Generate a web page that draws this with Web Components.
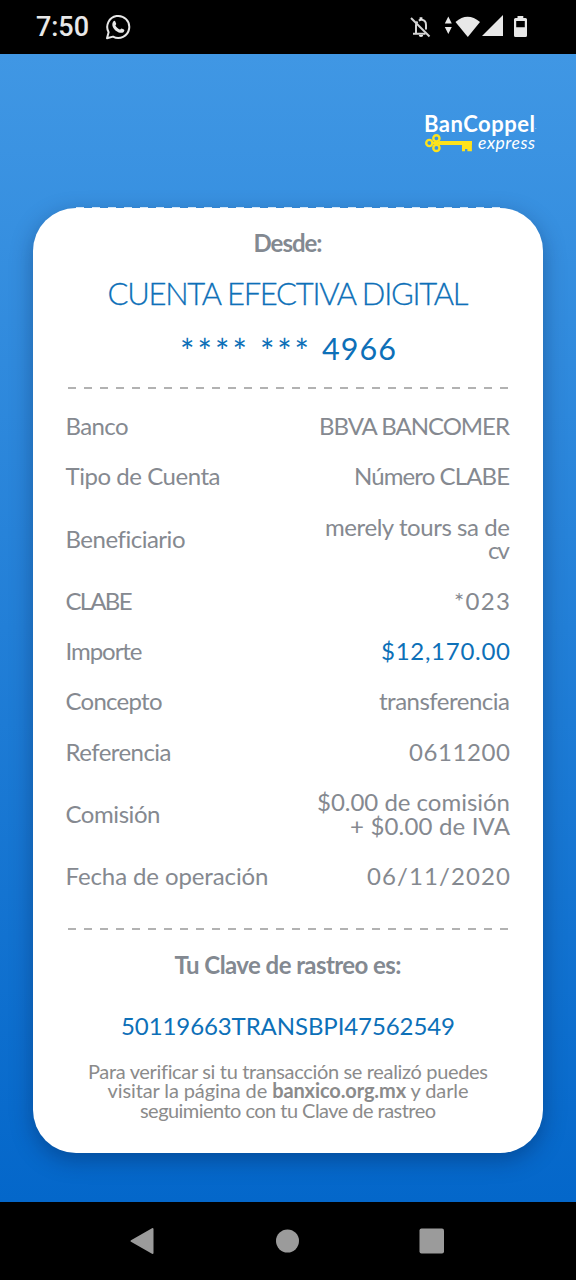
<!DOCTYPE html>
<html lang="es">
<head>
<meta charset="utf-8">
<title>BanCoppel express</title>
<style>
    html, body {
        margin: 0;
        height: 100%;
        background: #000;
    }

    body {
        font-family: Lato, "Liberation Sans", sans-serif;
        overflow: hidden;
    }
</style>
</head>
<body>
<bc-screen>
    <bc-status slot="status" time="7:50"></bc-status>
    <bc-logo slot="logo"></bc-logo>
    <bc-card>
        <bc-line kind="heading"><fit-text width="69">Desde:</fit-text></bc-line>
        <bc-line kind="title"><fit-text width="361">CUENTA EFECTIVA DIGITAL</fit-text></bc-line>
        <bc-line kind="number"><fit-text width="67" class="mask">****</fit-text><fit-text width="49" class="mask">***</fit-text><fit-text width="74">4966</fit-text></bc-line>
        <bc-divider></bc-divider>
        <bc-rows>
            <bc-row label="Banco" label-width="63"><fit-text width="191">BBVA BANCOMER</fit-text></bc-row>
            <bc-row label="Tipo de Cuenta" label-width="155"><fit-text width="156">Número CLABE</fit-text></bc-row>
            <bc-row label="Beneficiario" label-width="120"><fit-text width="185">merely tours sa de</fit-text><fit-text width="22">cv</fit-text></bc-row>
            <bc-row label="CLABE" label-width="67"><fit-text width="56">*023</fit-text></bc-row>
            <bc-row label="Importe" label-width="77" accent><fit-text width="129">$12,170.00</fit-text></bc-row>
            <bc-row label="Concepto" label-width="97"><fit-text width="131">transferencia</fit-text></bc-row>
            <bc-row label="Referencia" label-width="106"><fit-text width="101">0611200</fit-text></bc-row>
            <bc-row label="Comisión" label-width="95"><fit-text width="193">$0.00 de comisión</fit-text><fit-text width="160">+ $0.00 de IVA</fit-text></bc-row>
            <bc-row label="Fecha de operación" label-width="203"><fit-text width="143">06/11/2020</fit-text></bc-row>
        </bc-rows>
        <bc-divider style="margin-top: 27.5px"></bc-divider>
        <bc-line kind="clave"><fit-text width="227">Tu Clave de rastreo es:</fit-text></bc-line>
        <bc-line kind="tracking"><fit-text width="334">50119663TRANSBPI47562549</fit-text></bc-line>
        <bc-note>
            <fit-text width="400">Para verificar si tu transacción se realizó puedes</fit-text>
            <fit-text width="361">visitar la página de <b>banxico.org.mx</b> y darle</fit-text>
            <fit-text width="296">seguimiento con tu Clave de rastreo</fit-text>
        </bc-note>
    </bc-card>
    <bc-nav slot="nav"></bc-nav>
</bc-screen>

<script>
// Spreads its text over a given width with letter spacing
class FitText extends HTMLElement {

    constructor() {
        super();
        this.attachShadow({ mode: "open" });
        this.shadowRoot.innerHTML = `
        <style>
            :host {
            display: block;
            white-space: nowrap;
            font-kerning: normal;
            }

            :host(.mask) {
            font-size: 34px;
            line-height: 46px;
            height: 40px;
            }

            span {
            display: inline-block;
            }
        </style>
        <span><slot></slot></span>
        `;
    }

    connectedCallback() {
        const span = this.shadowRoot.querySelector("span");
        const width = Number(this.getAttribute("width"));
        const count = this.textContent.length;
        // turn ligatures off before measuring, as letter spacing does
        span.style.fontVariantLigatures = "none";
        const natural = span.getBoundingClientRect().width;
        const spacing = (width - natural) / (count - 1);
        span.style.letterSpacing = `${spacing}px`;
        span.style.marginRight = `${-spacing}px`;
    }
}

class BCScreen extends HTMLElement {

    constructor() {
        super();
        this.attachShadow({ mode: "open" });
        this.shadowRoot.innerHTML = `
        <style>
            :host {
            display: flex;
            flex-direction: column;
            width: 576px;
            height: 1280px;
            }

            main {
            flex: 1;
            display: flex;
            flex-direction: column;
            background: linear-gradient(#4097e4, #0467ca);
            }

            header {
            display: flex;
            justify-content: flex-end;
            height: 95px;
            padding: 59px 39px 0 0;
            }
        </style>
        <slot name="status"></slot>
        <main>
            <header><slot name="logo"></slot></header>
            <slot></slot>
        </main>
        <slot name="nav"></slot>
        `;
    }
}

class BCStatus extends HTMLElement {

    constructor() {
        super();
        this.attachShadow({ mode: "open" });
    }

    connectedCallback() {
        this.shadowRoot.innerHTML = `
        <style>
            :host {
            display: flex;
            align-items: center;
            justify-content: space-between;
            box-sizing: border-box;
            height: 54px;
            padding: 0 48px 0 36px;
            background: #000;
            color: #e8e8e8;
            font: 500 27px/56px Roboto, sans-serif;
            }

            .left {
            display: flex;
            align-items: center;
            gap: 16px;
            }

            svg {
            display: block;
            }
        </style>
        <div class="left">
            <fit-text width="53">${this.getAttribute("time")}</fit-text>
            <svg width="26" height="26" viewBox="0 0 26 26" fill="none" stroke="#e8e8e8">
                <path d="M2 24.2 3.6 18.2A11 11 0 1 1 8 22.6Z" stroke-width="2" stroke-linejoin="round"/>
                <path d="M8.3 7.4C9.2 6.3 10 6.8 10.3 7.6L11.2 9.8C11.4 10.4 10.3 11.2 10.4 11.5 11.4 13.4 12.7 14.6 14.8 15.5 15.3 15.6 16.1 14.3 16.6 14.4L18.9 15.5C19.8 16 19.2 17.6 18.4 18.2 16.6 19.5 13.7 18.8 11.2 16.9 8.4 14.8 5.9 10.8 8.3 7.4Z" fill="#e8e8e8" stroke="none"/>
            </svg>
        </div>
        <svg width="118" height="30" viewBox="410 12 118 30" fill="#e8e8e8">
            <g fill="none" stroke="#d5d5d5" stroke-width="2">
                <path d="M411 18 429.5 36.5"/>
                <path d="M416 33.5V25.5Q416 23 417.5 21.5M413 33.8H425.5M418.8 20.6Q420.5 19.6 422 19.8 426 20.5 426 25V29.5"/>
            </g>
            <path d="M419.6 17.2H422.4V20H419.6ZM418.8 35H423.2Q423.2 37 421 37T418.8 35Z"/>
            <path d="M448.3 16.5 451.8 23.5H444.8ZM448.3 34 444.8 27H451.8Z"/>
            <path d="M455.5 22Q467.5 11.5 480 22L467.8 37Z"/>
            <path d="M503 15V36H482Z"/>
            <path fill-rule="evenodd" d="M517.5 16H523.3V18H525.5Q527 18 527 19.5V35.5Q527 37 525.5 37H515.5Q514 37 514 35.5V19.5Q514 18 515.5 18H517.5ZM516.2 21V27.3H524.8V21Z"/>
        </svg>
        `;
    }
}

class BCLogo extends HTMLElement {

    constructor() {
        super();
        this.attachShadow({ mode: "open" });
        this.shadowRoot.innerHTML = `
        <style>
            :host {
            display: block;
            width: 113px;
            color: #fff;
            }

            .name {
            display: flex;
            height: 21px;
            font: 700 22px/21px Lato, sans-serif;
            }

            small {
            font: 5px/29px Lato, sans-serif;
            }

            .express {
            display: flex;
            gap: 5px;
            font: italic 400 17.5px/18px Lato, sans-serif;
            }

            svg {
            display: block;
            margin-left: 1px;
            }
        </style>
        <div class="name"><fit-text width="111">BanCoppel</fit-text><small>.</small></div>
        <div class="express">
            <svg width="48" height="20" viewBox="0 0 48 20" fill="none" stroke="#fde21b" stroke-width="2.4">
                <circle cx="4.3" cy="9" r="3.1"/>
                <circle cx="11.4" cy="4.3" r="3.1"/>
                <circle cx="11.4" cy="13.9" r="3.1"/>
                <path d="M7 9H15" stroke-width="2"/>
                <path d="M14 9H47" stroke-width="3.8"/>
                <path d="M37 10V17.3H40V15H42.4V17.3H46.9V10Z" fill="#fde21b" stroke="none"/>
            </svg>
            <fit-text width="57">express</fit-text>
        </div>
        `;
    }
}

class BCCard extends HTMLElement {

    constructor() {
        super();
        this.attachShadow({ mode: "open" });
        this.shadowRoot.innerHTML = `
        <style>
            :host {
            display: block;
            box-sizing: border-box;
            width: 510px;
            height: 945px;
            margin-left: 33px;
            background: #fff;
            border-radius: 43px;
            box-shadow: 0 7px 22px rgba(0, 20, 60, .34);
            }

            .perforation {
            height: 1px;
            margin: 0 43px 19px;
            transform: translateY(-1px);
            background: repeating-linear-gradient(90deg, #d3e6f7 0 8px, transparent 8px 16px);
            }
        </style>
        <div class="perforation"></div>
        <slot></slot>
        `;
    }
}

class BCLine extends HTMLElement {

    constructor() {
        super();
        this.attachShadow({ mode: "open" });
        this.shadowRoot.innerHTML = `
        <style>
            :host {
            display: flex;
            justify-content: center;
            color: #0d70b8;
            }

            :host([kind="heading"]), :host([kind="clave"]) {
            color: #838991;
            font-size: 24px;
            font-weight: 700;
            line-height: 30px;
            }

            :host([kind="title"]) {
            margin-top: 15px;
            font-size: 31px;
            font-weight: 300;
            line-height: 40px;
            -webkit-text-stroke: .3px;
            }

            :host([kind="number"]) {
            gap: 13px;
            margin-top: 15px;
            font-size: 30.5px;
            line-height: 40px;
            }

            :host([kind="clave"]) {
            margin-top: 20px;
            }

            :host([kind="tracking"]) {
            margin-top: 31px;
            font-size: 24px;
            line-height: 30px;
            }
        </style>
        <slot></slot>
        `;
    }
}

class BCDivider extends HTMLElement {

    constructor() {
        super();
        this.attachShadow({ mode: "open" });
        this.shadowRoot.innerHTML = `
        <style>
            :host {
            display: block;
            width: 440px;
            height: 2px;
            margin: 19px 0 0 35px;
            background: repeating-linear-gradient(90deg, #b2b2b2 0 8px, transparent 8px 16px);
            }
        </style>
        `;
    }
}

class BCRows extends HTMLElement {

    constructor() {
        super();
        this.attachShadow({ mode: "open" });
        this.shadowRoot.innerHTML = `
        <style>
            :host {
            display: block;
            margin: 11.5px 33px 0 32.5px;
            color: #858990;
            font-size: 24px;
            line-height: 23.4px;
            }
        </style>
        <slot></slot>
        `;
    }
}

class BCRow extends HTMLElement {

    constructor() {
        super();
        this.attachShadow({ mode: "open" });
    }

    connectedCallback() {
        const label = this.getAttribute("label");
        const width = this.getAttribute("label-width");

        this.shadowRoot.innerHTML = `
        <style>
            :host {
            display: flex;
            justify-content: space-between;
            align-items: center;
            padding: 13.5px 0;
            }

            .value {
            display: flex;
            flex-direction: column;
            align-items: flex-end;
            }

            :host([accent]) .value {
            color: #0d70b8;
            }
        </style>
        <fit-text width="${width}">${label}</fit-text>
        <div class="value"><slot></slot></div>
        `;
    }
}

class BCNote extends HTMLElement {

    constructor() {
        super();
        this.attachShadow({ mode: "open" });
        this.shadowRoot.innerHTML = `
        <style>
            :host {
            display: flex;
            flex-direction: column;
            align-items: center;
            margin-top: 20.5px;
            color: #8b8b8b;
            font-size: 20px;
            line-height: 19.3px;
            }
        </style>
        <slot></slot>
        `;
    }
}

class BCNav extends HTMLElement {

    constructor() {
        super();
        this.attachShadow({ mode: "open" });
        this.shadowRoot.innerHTML = `
        <style>
            :host {
            display: flex;
            align-items: center;
            justify-content: space-between;
            box-sizing: border-box;
            height: 78px;
            padding: 0 131px 0 129px;
            background: #000;
            }
        </style>
        <svg width="26" height="28" viewBox="0 0 26 28" fill="#9b9b9b" stroke="#9b9b9b" stroke-width="2" stroke-linejoin="round"><path d="M2.5 14 23.5 2V26Z"/></svg>
        <svg width="24" height="24" viewBox="0 0 24 24" fill="#9b9b9b"><circle cx="12.5" cy="12" r="11.5"/></svg>
        <svg width="26" height="26" viewBox="0 0 26 26" fill="#9b9b9b"><rect x=".5" y=".5" width="24.5" height="25" rx="2"/></svg>
        `;
    }
}

// containers first, so that fit-text measures with their fonts applied
customElements.define("bc-screen", BCScreen);
customElements.define("bc-card", BCCard);
customElements.define("bc-line", BCLine);
customElements.define("bc-divider", BCDivider);
customElements.define("bc-rows", BCRows);
customElements.define("bc-row", BCRow);
customElements.define("bc-note", BCNote);
customElements.define("bc-status", BCStatus);
customElements.define("bc-logo", BCLogo);
customElements.define("bc-nav", BCNav);
customElements.define("fit-text", FitText);
</script>
</body>
</html>
